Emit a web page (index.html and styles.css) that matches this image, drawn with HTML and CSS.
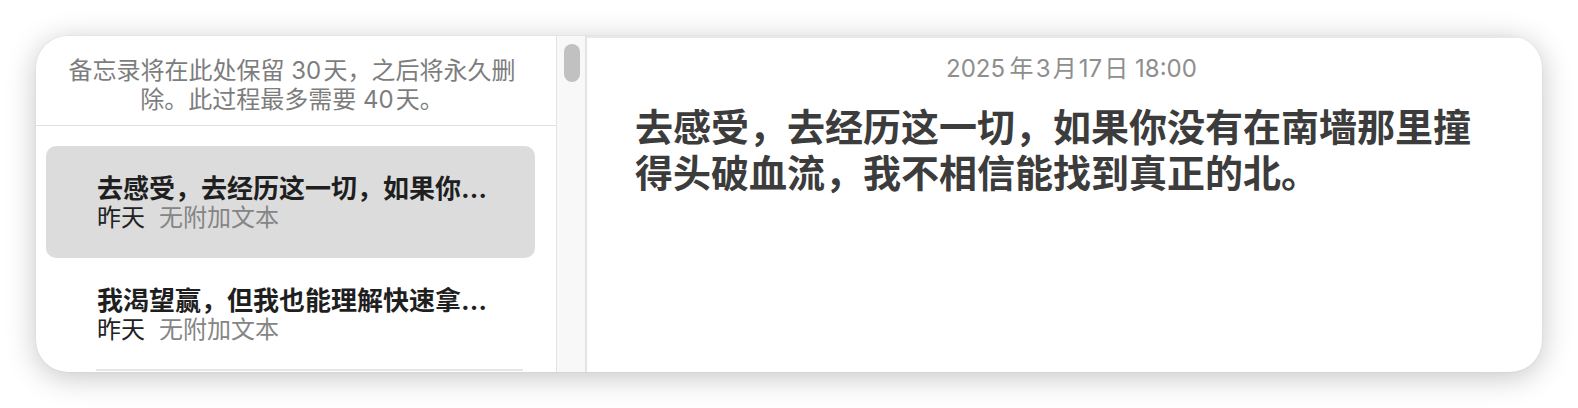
FILE: index.html
```html
<!DOCTYPE html>
<html lang="zh-CN">
<head>
<meta charset="utf-8">
<title>最近删除</title>
<link rel="stylesheet" href="styles.css">
</head>
<body>
<div class="stage">
  <div class="window">
    <aside class="sidebar">
      <p class="notice">备忘录将在此处保留 30&#8202;天，之后将永久删<br>除。此过程最多需要 40&#8202;天。</p>
      <ul class="notes">
        <li class="note selected">
          <div class="note-inner">
            <div class="note-title">去感受，去经历这一切，如果你没有在南墙那里撞得头破血流，我不相信能找到真正的北。</div>
            <div class="note-meta"><span class="note-date">昨天</span><span class="note-preview">无附加文本</span></div>
          </div>
        </li>
        <li class="note">
          <div class="note-inner divided">
            <div class="note-title">我渴望赢，但我也能理解快速拿到结果并不容易。</div>
            <div class="note-meta"><span class="note-date">昨天</span><span class="note-preview">无附加文本</span></div>
          </div>
        </li>
      </ul>
    </aside>
    <div class="scrollcol"><div class="thumb"></div></div>
    <main class="editor">
      <div class="stamp">2025&#8201;年&#8202;3&#8202;月&#8202;17&#8202;日 18:00</div>
      <h1 class="body-text">去感受，去经历这一切，如果你没有在南墙那里撞得头破血流，我不相信能找到真正的北。</h1>
    </main>
  </div>
</div>
</body>
</html>
```

FILE: styles.css
```css
* { box-sizing: border-box; }

html, body {
  margin: 0;
  background: #ffffff;
  font-family: Inter, "Noto Sans CJK SC", sans-serif;
}

.stage {
  padding: 36px;
}

.window {
  display: flex;
  width: 1506px;
  height: 336px;
  background: #ffffff;
  border-radius: 32px;
  overflow: hidden;
  box-shadow: 0 5px 30px rgba(0, 0, 0, 0.23), 0 0 2px rgba(0, 0, 0, 0.08);
}

/* ---------- sidebar ---------- */
.sidebar {
  width: 520px;
  flex: none;
  display: flex;
  flex-direction: column;
}

.notice {
  margin: 0;
  padding: 20px 20px 11px 12px;
  text-align: center;
  font-size: 24px;
  line-height: 29px;
  color: #7d7d7d;
  border-bottom: 1px solid #e1e1e1;
}

.notes {
  list-style: none;
  margin: 0;
  padding: 20px 21px 0 10px;
  display: flex;
  flex-direction: column;
}

.note {
  height: 112px;
  padding-left: 50px;
  border-radius: 10px;
}

.note.selected {
  background: #dcdcdc;
}

.note-inner {
  height: 113px;
  padding: 28px 0 0 1px;
}

.note.selected .note-inner {
  height: 112px;
}

.note-inner.divided {
  margin-right: 12px;
  border-bottom: 2px solid #e6e6e6;
}

.note-title {
  width: 392px;
  font-size: 26px;
  line-height: 29px;
  font-weight: 700;
  color: #1f1f1f;
  white-space: nowrap;
  overflow: hidden;
  text-overflow: ellipsis;
}

.note-meta {
  font-size: 24px;
  line-height: 29px;
  white-space: nowrap;
}

.note-date {
  color: #222222;
}

.note-preview {
  margin-left: 14px;
  color: #858585;
}

/* ---------- scroll column ---------- */
.scrollcol {
  width: 31px;
  flex: none;
  background: #f8f8f8;
  border-left: 1px solid #e4e4e4;
  border-right: 2px solid #e3e3e3;
  padding: 8px 0 0 7px;
}

.thumb {
  width: 16px;
  height: 38px;
  border-radius: 8px;
  background: #c1c1c1;
}

/* ---------- editor ---------- */
.editor {
  flex: 1;
  border-top: 2px solid #e8e8ec;
  padding: 16px 60px 0 48px;
}

.stamp {
  text-align: center;
  padding-left: 26px;
  font-size: 24px;
  line-height: 29px;
  color: #8e8e8e;
}

.body-text {
  margin: 21px 0 0;
  font-size: 38px;
  line-height: 46px;
  font-weight: 700;
  color: #3c3c3c;
}
```
